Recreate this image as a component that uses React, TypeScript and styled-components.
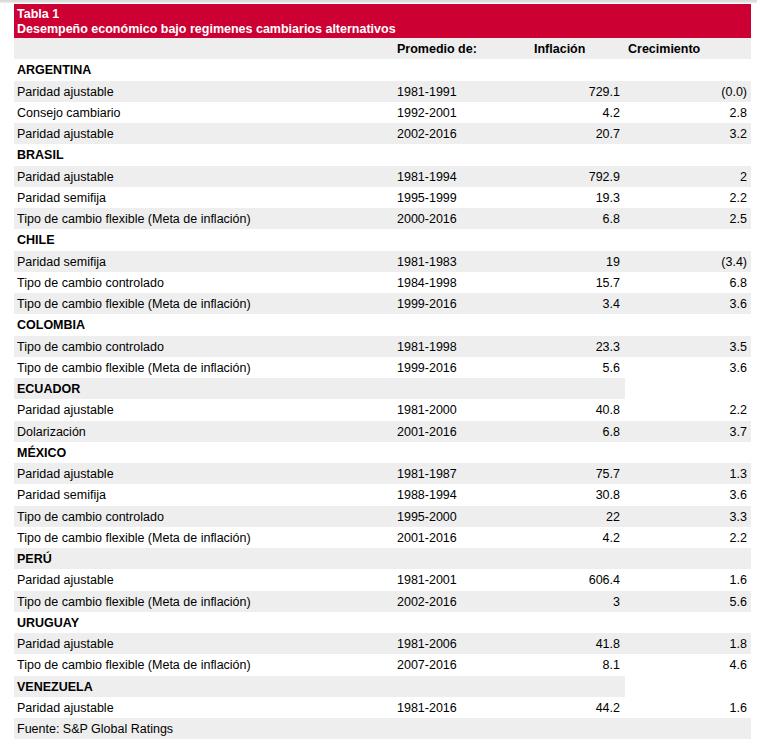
import styled, { createGlobalStyle } from "styled-components";

type Line = {
  label: string;
  period?: string;
  inflation?: string;
  growth?: string;
  country?: boolean;
  openEnd?: boolean;
};

const data: Array<Line> = [
  { label: "ARGENTINA", country: true },
  { label: "Paridad ajustable", period: "1981-1991", inflation: "729.1", growth: "(0.0)" },
  { label: "Consejo cambiario", period: "1992-2001", inflation: "4.2", growth: "2.8" },
  { label: "Paridad ajustable", period: "2002-2016", inflation: "20.7", growth: "3.2" },
  { label: "BRASIL", country: true },
  { label: "Paridad ajustable", period: "1981-1994", inflation: "792.9", growth: "2" },
  { label: "Paridad semifija", period: "1995-1999", inflation: "19.3", growth: "2.2" },
  { label: "Tipo de cambio flexible (Meta de inflación)", period: "2000-2016", inflation: "6.8", growth: "2.5" },
  { label: "CHILE", country: true },
  { label: "Paridad semifija", period: "1981-1983", inflation: "19", growth: "(3.4)" },
  { label: "Tipo de cambio controlado", period: "1984-1998", inflation: "15.7", growth: "6.8" },
  { label: "Tipo de cambio flexible (Meta de inflación)", period: "1999-2016", inflation: "3.4", growth: "3.6" },
  { label: "COLOMBIA", country: true },
  { label: "Tipo de cambio controlado", period: "1981-1998", inflation: "23.3", growth: "3.5" },
  { label: "Tipo de cambio flexible (Meta de inflación)", period: "1999-2016", inflation: "5.6", growth: "3.6" },
  { label: "ECUADOR", country: true, openEnd: true },
  { label: "Paridad ajustable", period: "1981-2000", inflation: "40.8", growth: "2.2" },
  { label: "Dolarización", period: "2001-2016", inflation: "6.8", growth: "3.7" },
  { label: "MÉXICO", country: true },
  { label: "Paridad ajustable", period: "1981-1987", inflation: "75.7", growth: "1.3" },
  { label: "Paridad semifija", period: "1988-1994", inflation: "30.8", growth: "3.6" },
  { label: "Tipo de cambio controlado", period: "1995-2000", inflation: "22", growth: "3.3" },
  { label: "Tipo de cambio flexible (Meta de inflación)", period: "2001-2016", inflation: "4.2", growth: "2.2" },
  { label: "PERÚ", country: true },
  { label: "Paridad ajustable", period: "1981-2001", inflation: "606.4", growth: "1.6" },
  { label: "Tipo de cambio flexible (Meta de inflación)", period: "2002-2016", inflation: "3", growth: "5.6" },
  { label: "URUGUAY", country: true },
  { label: "Paridad ajustable", period: "1981-2006", inflation: "41.8", growth: "1.8" },
  { label: "Tipo de cambio flexible (Meta de inflación)", period: "2007-2016", inflation: "8.1", growth: "4.6" },
  { label: "VENEZUELA", country: true, openEnd: true },
  { label: "Paridad ajustable", period: "1981-2016", inflation: "44.2", growth: "1.6" },
];

const GlobalStyle = createGlobalStyle`
  html, body {
    margin: 0;
    padding: 0;
    background: #ffffff;
  }
  body {
    font-family: "Liberation Sans", Arial, sans-serif;
    color: #000000;
  }
`;

const App = () => {
  return (
    <>
      <GlobalStyle />
      <TopStrip />
      <Page>
        <Table>
          <Caption>
            <div>Tabla 1</div>
            <div>Desempeño económico bajo regimenes cambiarios alternativos</div>
          </Caption>
          <Row $shade>
            <Cell />
            <HeadCell $pad="1px 4px 0">Promedio de:</HeadCell>
            <HeadCell $pad="1px 4px 0">Inflación</HeadCell>
            <HeadCell $pad="1px 3px 0">Crecimiento</HeadCell>
          </Row>
          {data.map((line, i) => {
            const shade = i % 2 === 1;
            if (line.country) {
              return (
                <Row key={i} $shade={shade}>
                  <CountryCell>{line.label}</CountryCell>
                  <Cell />
                  <Cell />
                  <Cell $clear={line.openEnd} />
                </Row>
              );
            }
            return (
              <Row key={i} $shade={shade}>
                <Cell>{line.label}</Cell>
                <Cell $pad="1px 4px 0">{line.period}</Cell>
                <NumCell $pad="1px 5px 0 4px">{line.inflation}</NumCell>
                <NumCell $pad="1px 4px 0 3px">{line.growth}</NumCell>
              </Row>
            );
          })}
          <Row $shade={data.length % 2 === 1}>
            <SourceCell>Fuente: S&amp;P Global Ratings</SourceCell>
          </Row>
        </Table>
      </Page>
    </>
  );
};

export default App;

const TopStrip = styled.div`
  height: 3px;
  background: linear-gradient(#d6d6d6, #ececec);
`;

const Page = styled.div`
  padding: 1px 0 0 14px;
`;

const Table = styled.div`
  width: 737px;
  font-size: 12.5px;
`;

const Caption = styled.div`
  background: #cc0033;
  color: #ffffff;
  font-weight: bold;
  font-size: 12.5px;
  line-height: 15px;
  padding: 3px 3px 1px 3px;
`;

const Row = styled.div<{ $shade?: boolean }>`
  display: grid;
  grid-template-columns: 379px 137px 95px 126px;
  height: 21.25px;
  background: ${(p) => (p.$shade ? "#eeeeee" : "#ffffff")};
`;

const Cell = styled.div<{ $pad?: string; $clear?: boolean }>`
  display: flex;
  align-items: center;
  padding: ${(p) => p.$pad ?? "1px 3px 0"};
  white-space: nowrap;
  ${(p) => (p.$clear ? "background: #ffffff;" : "")}
`;

const HeadCell = styled(Cell)`
  font-weight: bold;
`;

const CountryCell = styled(Cell)`
  font-weight: bold;
`;

const NumCell = styled(Cell)`
  justify-content: flex-end;
`;

const SourceCell = styled(Cell)`
  grid-column: 1 / -1;
`;
